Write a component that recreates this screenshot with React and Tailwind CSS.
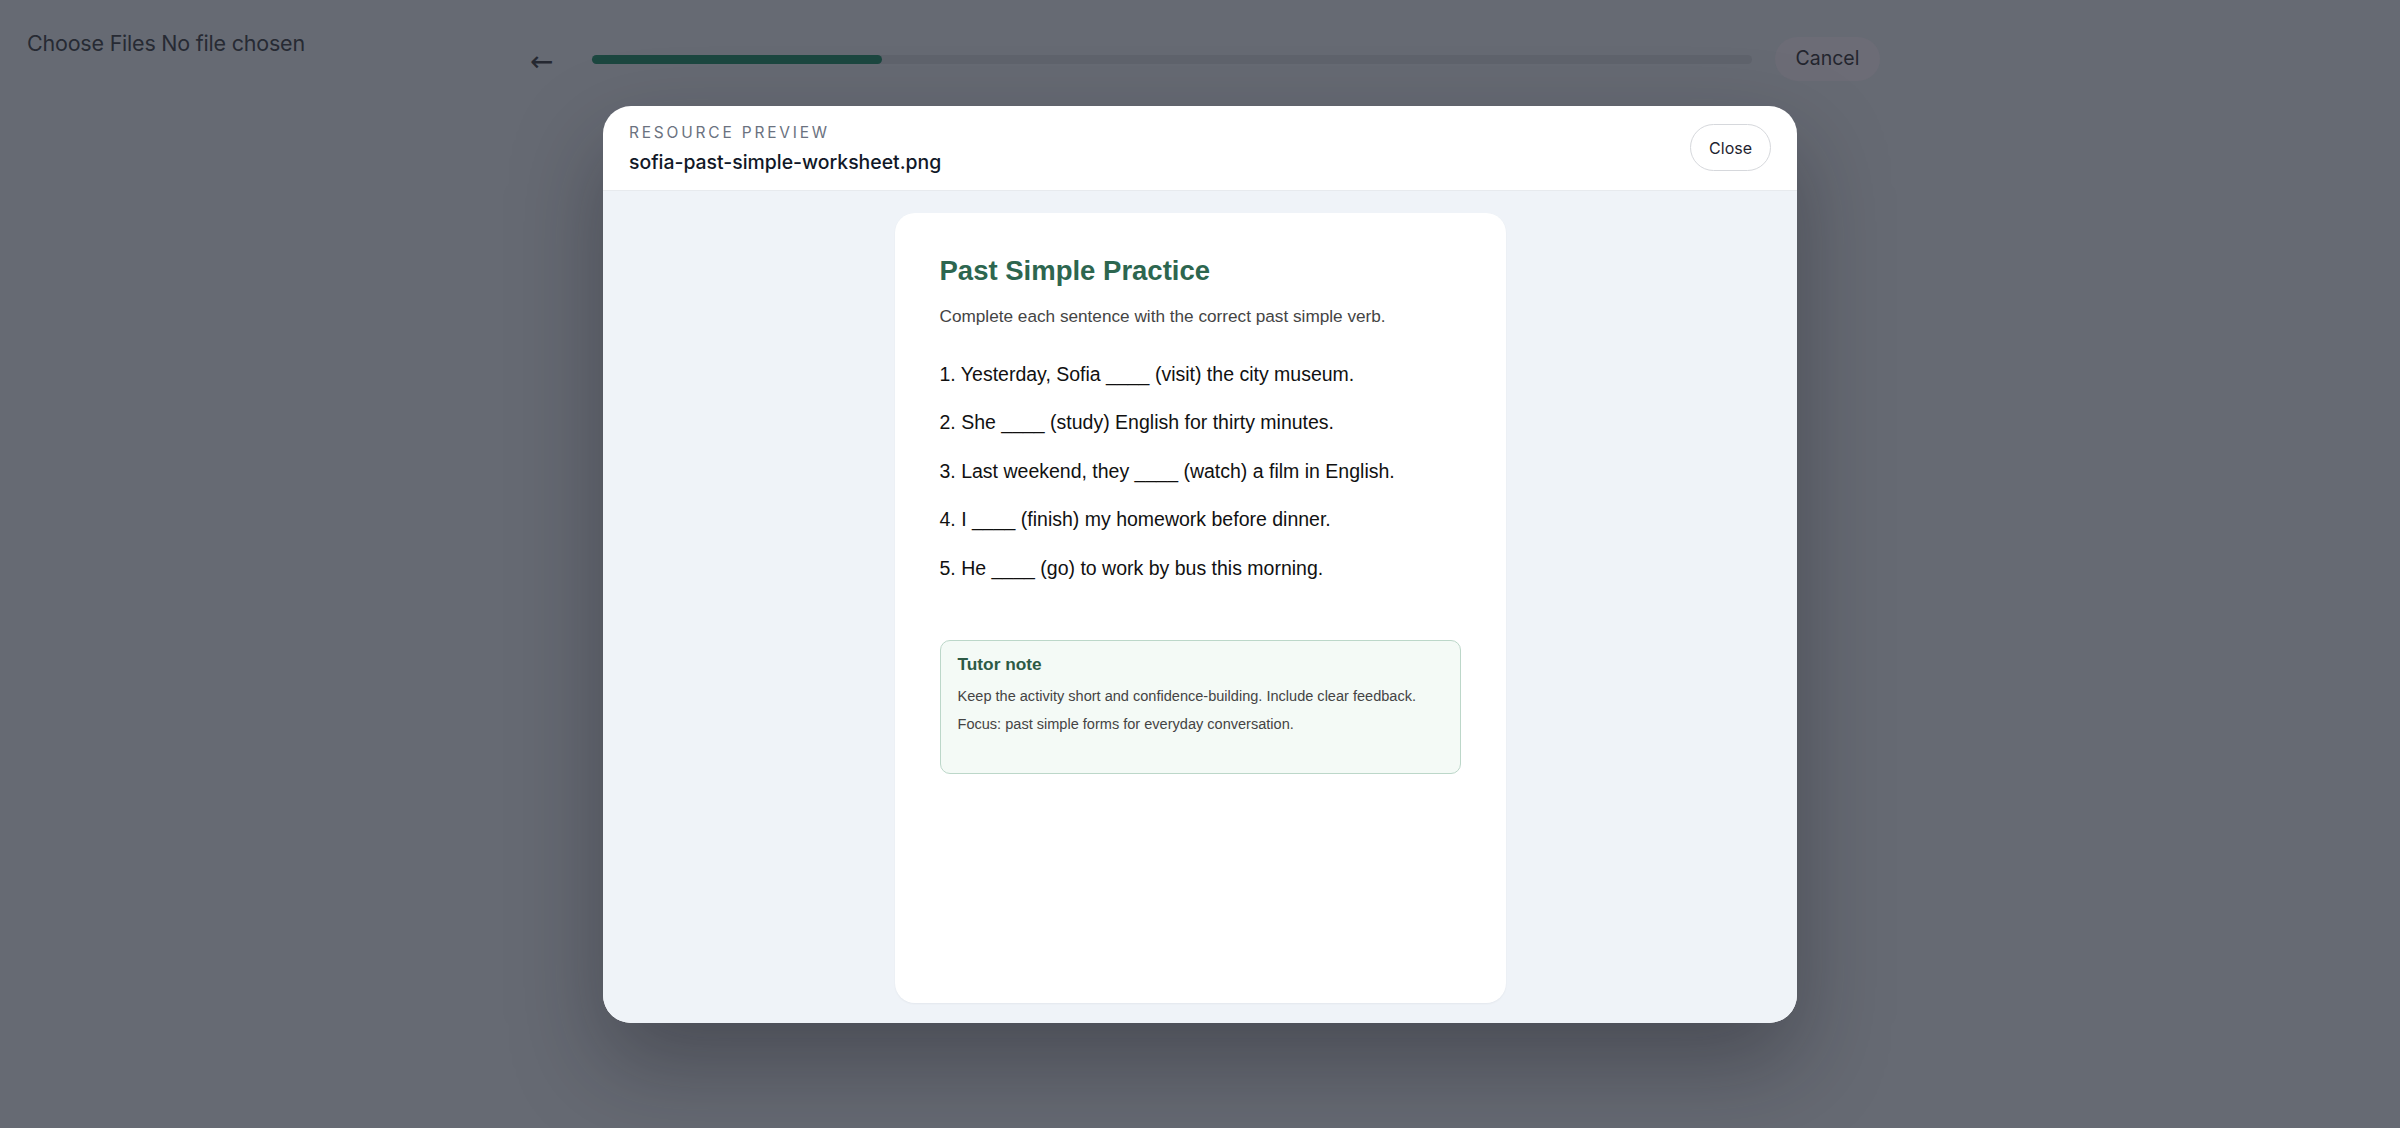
import React from 'react';

const ui = { fontFamily: 'Inter, "Noto Sans", sans-serif' };
const sheet = { fontFamily: '"Liberation Sans", Arial, sans-serif' };

const questions = [
  '1. Yesterday, Sofia ____ (visit) the city museum.',
  '2. She ____ (study) English for thirty minutes.',
  '3. Last weekend, they ____ (watch) a film in English.',
  '4. I ____ (finish) my homework before dinner.',
  '5. He ____ (go) to work by bus this morning.',
];

function Worksheet() {
  return (
    <div
      className="w-[611px] h-[790px] bg-white rounded-[20px] px-[45px] pt-[41.5px] shadow-[0_1px_2px_rgba(15,23,42,0.05)]"
      style={sheet}
    >
      <h1 className="text-[27.5px] leading-[33px] font-bold text-[#2d664f]">Past Simple Practice</h1>
      <p className="mt-[18px] text-[17.2px] leading-[22px] text-[#444]">
        Complete each sentence with the correct past simple verb.
      </p>
      <ol className="mt-[35px] flex flex-col gap-[24.4px]">
        {questions.map((q) => (
          <li key={q} className="text-[19.5px] leading-[24px] text-[#111]">{q}</li>
        ))}
      </ol>
      <div className="mt-[60px] h-[134px] rounded-[10px] border border-[#bcd7c9] bg-[#f4faf6] px-[17px] pt-[13px]">
        <div className="text-[17.3px] leading-[21px] font-bold text-[#2d5a45]">Tutor note</div>
        <p className="mt-[7px] text-[14.55px] leading-[28px] text-[#444]">
          Keep the activity short and confidence-building. Include clear feedback.
        </p>
        <p className="text-[14.55px] leading-[28px] text-[#444]">
          Focus: past simple forms for everyday conversation.
        </p>
      </div>
    </div>
  );
}

function PreviewModal() {
  return (
    <div className="absolute inset-0 flex items-center justify-center">
      <div className="w-[1194px] h-[917px] bg-white rounded-[28px] overflow-hidden flex flex-col shadow-[0_40px_90px_rgba(20,20,30,0.35)]">
        <div className="h-[85px] shrink-0 flex items-center justify-between px-[26px] border-b border-[#e7eaee]">
          <div className="flex flex-col gap-[6px] pt-[2px]">
            <span className="text-[15.5px] leading-[20px] tracking-[0.18em] uppercase text-[#6b7280]">
              Resource preview
            </span>
            <span className="text-[19.4px] leading-[26px] font-medium text-[#111827]">
              sofia-past-simple-worksheet.png
            </span>
          </div>
          <button className="h-[47px] px-[18px] rounded-full border border-[#d6d8dc] text-[16px] text-[#1f2430] bg-white">
            Close
          </button>
        </div>
        <div className="flex-1 bg-[#eff3f8] flex justify-center pt-[22px]">
          <Worksheet />
        </div>
      </div>
    </div>
  );
}

export default function App() {
  return (
    <div className="relative w-full h-[1128px] bg-[#666a73] overflow-hidden" style={ui}>
      <div className="flex items-start pl-[27px]">
        <div className="w-[503px] shrink-0 pt-[31px] text-[21.5px] leading-[24px] text-[#272a33] tracking-[-0.01em]">
          Choose Files No file chosen
        </div>
        <div className="mt-[37px] w-[1350px] h-[44px] flex items-center">
          <span
            className="w-[27px] text-[28px] leading-none text-[#252831] mt-[6px]"
            style={{ fontFamily: '"DejaVu Sans", sans-serif' }}
          >
            ←
          </span>
          <div className="ml-[35px] w-[1160px] h-[9px] rounded-full bg-[#5f636c]">
            <div className="w-[290px] h-full rounded-full bg-[#1c4740]" />
          </div>
          <button className="ml-[23px] h-[44px] w-[105px] rounded-full bg-[#6c6c76] text-[19.5px] text-[#23252e]">
            Cancel
          </button>
        </div>
      </div>
      <PreviewModal />
    </div>
  );
}
